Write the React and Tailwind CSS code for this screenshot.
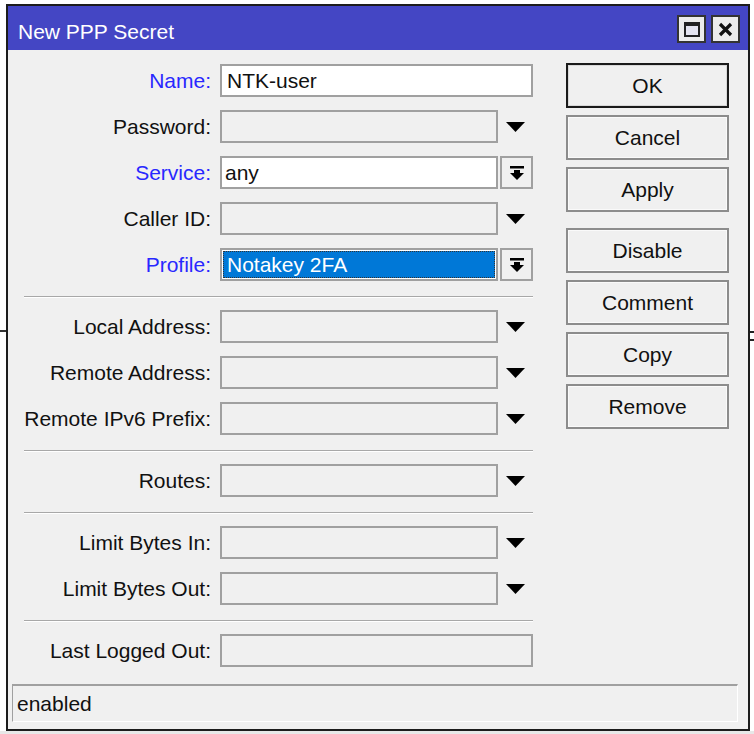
import React from "react";

const font = { fontFamily: '"Liberation Sans", Arial, sans-serif' };

function Arrow() {
  return (
    <div className="w-[35px] h-full flex items-center justify-center">
      <svg width="19" height="10" viewBox="0 0 19 10">
        <polygon points="0,0 19,0 9.5,10" fill="#000" />
      </svg>
    </div>
  );
}

function DropBtn() {
  return (
    <div className="ml-[2px] w-[33px] h-full border-2 border-[#a0a0a0] bg-[#f0f0f0] flex items-center justify-center">
      <svg width="14" height="14" viewBox="0 0 14 14">
        <rect x="0" y="0" width="14" height="2.5" fill="#000" />
        <rect x="4" y="4" width="6" height="3" fill="#000" />
        <polygon points="0,7 14,7 7,14" fill="#000" />
      </svg>
    </div>
  );
}

function Row({ label, blue, children }) {
  return (
    <div className="flex items-center h-[33px]">
      <div
        className={
          "w-[204px] pr-[1px] text-right text-[21px] leading-none " +
          (blue ? "text-[#2828ff]" : "text-[#111]")
        }
      >
        {label}
      </div>
      <div className="ml-[8px] flex h-full">{children}</div>
    </div>
  );
}

function Field({ w, white, children }) {
  return (
    <div
      className={
        "h-full border-2 border-[#a0a0a0] flex items-center text-[21px] leading-none text-[#111] " +
        (white ? "bg-white " : "bg-[#f0f0f0] ") +
        (w === "full" ? "w-[313px]" : "w-[278px]")
      }
    >
      {children}
    </div>
  );
}

function Sep() {
  return (
    <div className="ml-[16px] w-[509px] mt-[15px] mb-[12px] h-[2px] border-t border-[#a8a8a8] border-b border-b-white" />
  );
}

function Btn({ children, def }) {
  return (
    <div
      className={
        "w-[163px] h-[45px] flex items-center justify-center text-[21px] leading-none text-[#111] bg-[#f0f0f0] " +
        (def
          ? "border-2 border-[#1a1a1a] shadow-[inset_0_0_0_1px_#d8d8d8]"
          : "border-2 border-[#8c8c8c] shadow-[inset_0_0_0_1px_#fafafa]")
      }
    >
      {children}
    </div>
  );
}

export default function App() {
  return (
    <div className="relative w-[754px] h-[734px] bg-white overflow-hidden" style={font}>
      {/* background window bits */}
      <div className="absolute left-0 top-[330px] w-[6px] h-[2px] bg-[#333]" />
      <div className="absolute left-[750px] top-[331px] w-[4px] h-[2px] bg-[#222]" />
      <div className="absolute left-[750px] top-[339px] w-[4px] h-[2px] bg-[#222]" />
      <div className="absolute left-0 top-[731px] w-[754px] h-[3px] bg-[#e8e8e8]" />

      <div className="absolute left-[6px] top-[4px] w-[744px] h-[727px] border-2 border-[#1c1c1c] bg-[#f0f0f0] flex flex-col">
        {/* title bar */}
        <div className="h-[44px] bg-[#4446c4] flex items-center pl-[10px] pr-[8px]">
          <div className="text-white text-[21px] leading-none pt-[6px] flex-1">New PPP Secret</div>
          <div className="flex gap-[5px] pt-[2px]">
            <div className="w-[29px] h-[28px] bg-[#ececec] border-2 border-[#333] flex items-center justify-center">
              <div className="w-[16px] h-[15px] border-2 border-t-[4px] border-[#222] bg-[#e4e4f0]" />
            </div>
            <div className="w-[29px] h-[28px] bg-[#ececec] border-2 border-[#333] flex items-center justify-center">
              <svg width="15" height="15" viewBox="0 0 15 15">
                <path d="M2 2 L13 13 M13 2 L2 13" stroke="#111" strokeWidth="3.2" />
              </svg>
            </div>
          </div>
        </div>

        {/* body */}
        <div className="flex">
          <div className="w-[558px] pt-[14px] flex flex-col">
            <Row label="Name:" blue>
              <Field w="full" white>
                <span className="pl-[5px]">NTK-user</span>
              </Field>
            </Row>
            <div className="h-[13px]" />
            <Row label="Password:">
              <Field />
              <Arrow />
            </Row>
            <div className="h-[13px]" />
            <Row label="Service:" blue>
              <Field white>
                <span className="pl-[3px]">any</span>
              </Field>
              <DropBtn />
            </Row>
            <div className="h-[13px]" />
            <Row label="Caller ID:">
              <Field />
              <Arrow />
            </Row>
            <div className="h-[13px]" />
            <Row label="Profile:" blue>
              <div className="w-[278px] h-full border-2 border-[#a0a0a0] bg-white p-[1px]">
                <div className="h-full bg-[#0078d7] text-white text-[21px] leading-none flex items-center pl-[3px] border border-dotted border-[#333]">
                  Notakey 2FA
                </div>
              </div>
              <DropBtn />
            </Row>
            <Sep />
            <Row label="Local Address:">
              <Field />
              <Arrow />
            </Row>
            <div className="h-[13px]" />
            <Row label="Remote Address:">
              <Field />
              <Arrow />
            </Row>
            <div className="h-[13px]" />
            <Row label="Remote IPv6 Prefix:">
              <Field />
              <Arrow />
            </Row>
            <Sep />
            <Row label="Routes:">
              <Field />
              <Arrow />
            </Row>
            <Sep />
            <Row label="Limit Bytes In:">
              <Field />
              <Arrow />
            </Row>
            <div className="h-[13px]" />
            <Row label="Limit Bytes Out:">
              <Field />
              <Arrow />
            </Row>
            <Sep />
            <Row label="Last Logged Out:">
              <Field w="full" />
            </Row>
          </div>

          <div className="pt-[13px] flex flex-col gap-[7px]">
            <Btn def>OK</Btn>
            <Btn>Cancel</Btn>
            <Btn>Apply</Btn>
            <div className="h-[2px]" />
            <Btn>Disable</Btn>
            <Btn>Comment</Btn>
            <Btn>Copy</Btn>
            <Btn>Remove</Btn>
          </div>
        </div>

        {/* status bar */}
        <div className="mt-[17px] ml-[4px] w-[726px] h-[38px] border-t-2 border-l border-[#a0a0a0] border-r border-b border-r-white border-b-white flex items-center pl-[4px] text-[21px] leading-none text-[#111]">
          enabled
        </div>
      </div>
    </div>
  );
}
